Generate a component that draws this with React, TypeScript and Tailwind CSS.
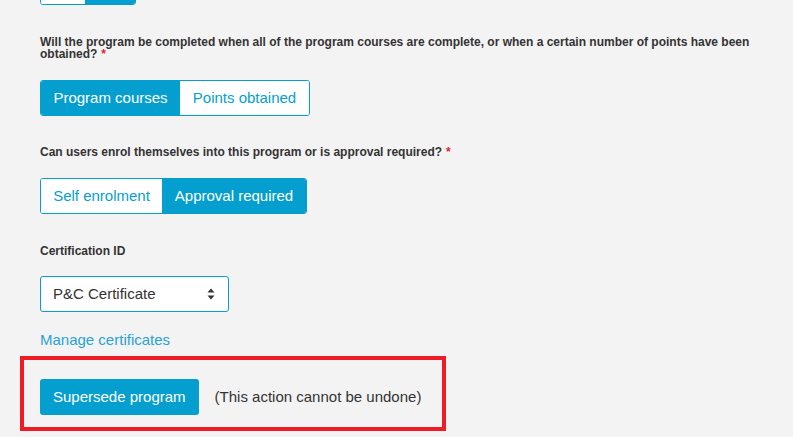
import React from 'react';

const FONT = { fontFamily: '"Liberation Sans", Arial, sans-serif' };

type Seg = { label: string; active: boolean; w?: string };

// Сегментированный переключатель (две кнопки рядом)
function Toggle({ items, className = '' }: { items: Seg[]; className?: string }) {
  return (
    <div className={`flex h-[36px] w-fit rounded-[3px] border border-[#049fcf] overflow-hidden ${className}`}>
      {items.map((it, i) => (
        <div
          key={i}
          className={`flex items-center justify-center px-[12px] text-[15px] ${it.w ?? ''} ${
            it.active ? 'bg-[#049fcf] text-white' : 'bg-white text-[#049fcf]'
          }`}
        >
          {it.label}
        </div>
      ))}
    </div>
  );
}

function Label({ children, required }: { children: React.ReactNode; required?: boolean }) {
  return (
    <p className="text-[12px] leading-[12px] font-bold text-[#333]">
      {children}
      {required && <span className="text-[#e8202a] ml-[4px]">*</span>}
    </p>
  );
}

export default function App() {
  return (
    <div style={FONT} className="w-[793px] h-[437px] bg-[#f3f3f3] overflow-hidden pl-[40px] pr-[20px]">
      {/* Верхний переключатель — виден только нижний край */}
      <Toggle
        className="mt-[-31px]"
        items={[
          { label: '', active: false, w: 'w-[44px]' },
          { label: '', active: true, w: 'w-[50px]' },
        ]}
      />

      <div className="mt-[31px]">
        <Label required>
          Will the program be completed when all of the program courses are complete, or when a certain number of
          points have been obtained?
        </Label>
      </div>
      <Toggle
        className="mt-[20px]"
        items={[
          { label: 'Program courses', active: true, w: 'w-[139px]' },
          { label: 'Points obtained', active: false, w: 'w-[129px]' },
        ]}
      />

      <div className="mt-[30px]">
        <Label required>Can users enrol themselves into this program or is approval required?</Label>
      </div>
      <Toggle
        className="mt-[20px]"
        items={[
          { label: 'Self enrolment', active: false, w: 'w-[121px]' },
          { label: 'Approval required', active: true, w: 'w-[144px]' },
        ]}
      />

      <div className="mt-[31px]">
        <Label>Certification ID</Label>
      </div>
      <div className="mt-[19px] flex items-center justify-between w-[189px] h-[36px] bg-white border border-[#049fcf] rounded-[3px] pl-[12px] pr-[13px] text-[15px] text-[#333]">
        <span>P&amp;C Certificate</span>
        <svg width="8" height="12" viewBox="0 0 8 12">
          <path d="M4 0.5 L7.5 4.5 L0.5 4.5 Z" fill="#333" />
          <path d="M4 11.5 L7.5 7.5 L0.5 7.5 Z" fill="#333" />
        </svg>
      </div>

      <a className="block mt-[19px] text-[15px] leading-[18px] text-[#2aa2d6] w-fit">Manage certificates</a>

      {/* Выделенная область */}
      <div className="mt-[7px] ml-[-20px] w-[426px] border-[4px] border-[#ee1c25] pl-[16px] pt-[19px] pb-[12px] flex items-center">
        <button className="h-[36px] px-[13px] rounded-[3px] bg-[#049fcf] text-white text-[15px]">Supersede program</button>
        <span className="ml-[16px] text-[15px] text-[#333]">(This action cannot be undone)</span>
      </div>
    </div>
  );
}
